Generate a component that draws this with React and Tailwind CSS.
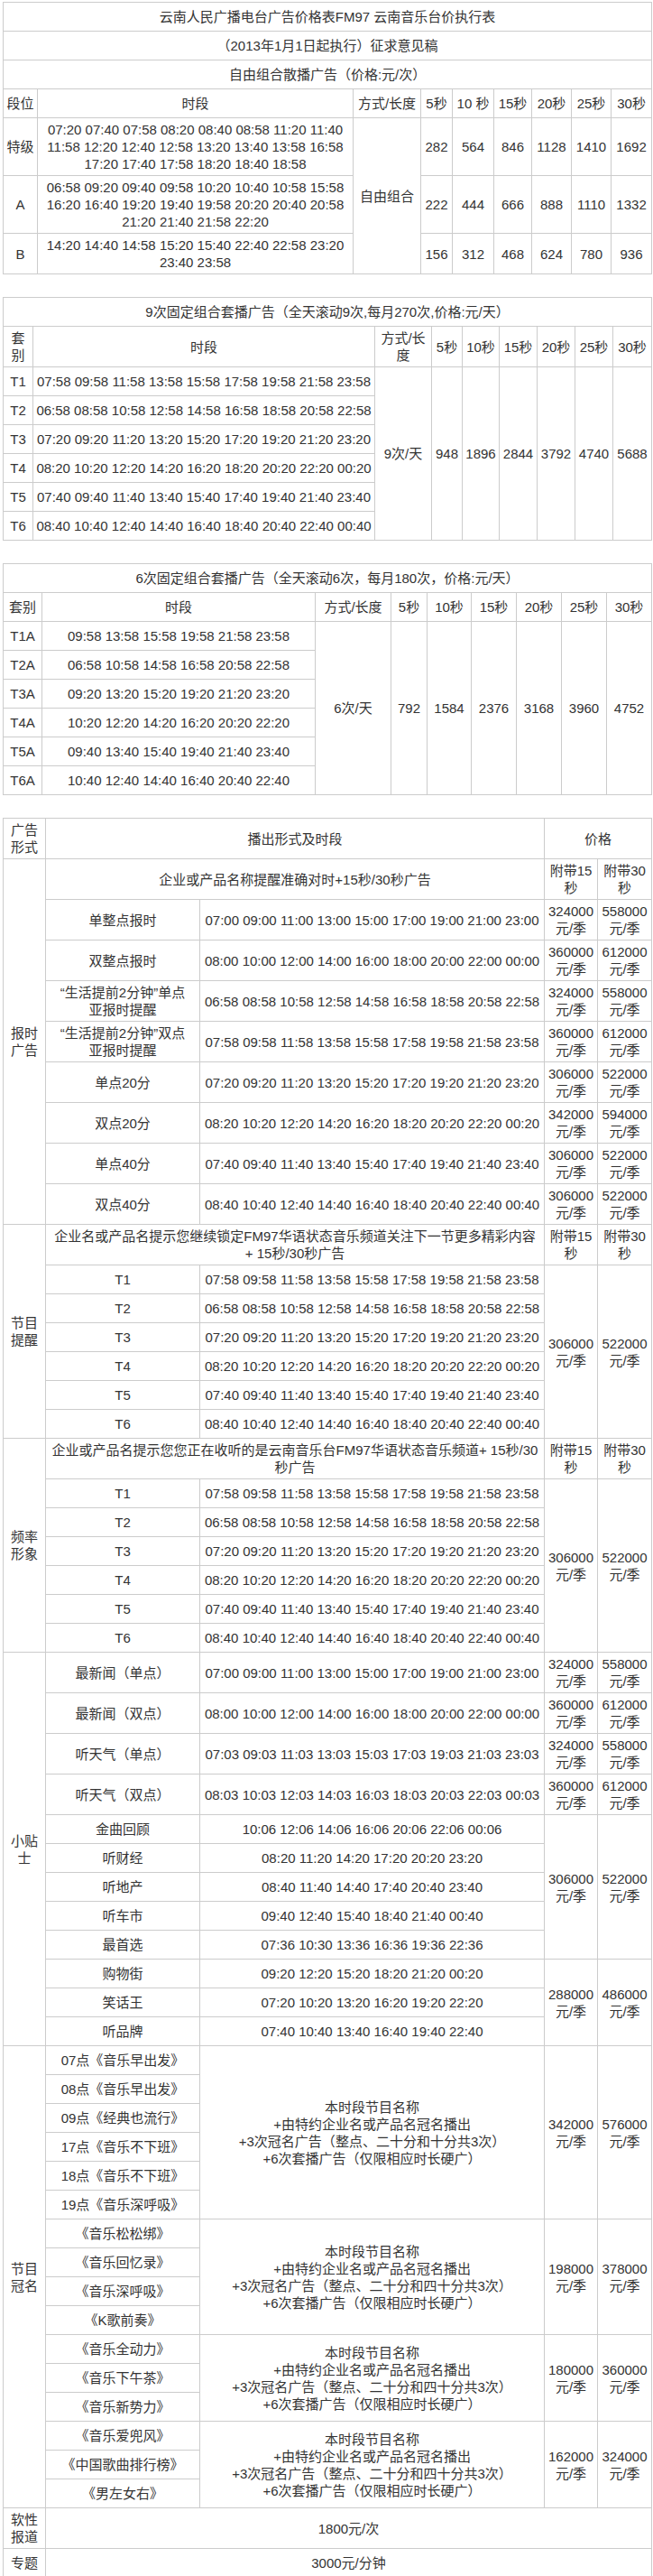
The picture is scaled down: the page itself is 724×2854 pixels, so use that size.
import React from 'react'

const TD = 'border border-[#cccccc] px-[3px] py-[3px] text-center align-middle font-normal'

const T_TIMES = [
  ['T1', '07:58 09:58 11:58 13:58 15:58 17:58 19:58 21:58 23:58'],
  ['T2', '06:58 08:58 10:58 12:58 14:58 16:58 18:58 20:58 22:58'],
  ['T3', '07:20 09:20 11:20 13:20 15:20 17:20 19:20 21:20 23:20'],
  ['T4', '08:20 10:20 12:20 14:20 16:20 18:20 20:20 22:20 00:20'],
  ['T5', '07:40 09:40 11:40 13:40 15:40 17:40 19:40 21:40 23:40'],
  ['T6', '08:40 10:40 12:40 14:40 16:40 18:40 20:40 22:40 00:40'],
]

const TA_TIMES = [
  ['T1A', '09:58 13:58 15:58 19:58 21:58 23:58'],
  ['T2A', '06:58 10:58 14:58 16:58 20:58 22:58'],
  ['T3A', '09:20 13:20 15:20 19:20 21:20 23:20'],
  ['T4A', '10:20 12:20 14:20 16:20 20:20 22:20'],
  ['T5A', '09:40 13:40 15:40 19:40 21:40 23:40'],
  ['T6A', '10:40 12:40 14:40 16:40 20:40 22:40'],
]

const FREE_ROWS = [
  {
    level: '特级',
    times: '07:20 07:40 07:58 08:20 08:40 08:58 11:20 11:40 11:58 12:20 12:40 12:58 13:20 13:40 13:58 16:58 17:20 17:40 17:58 18:20 18:40 18:58',
    prices: [282, 564, 846, 1128, 1410, 1692],
  },
  {
    level: 'A',
    times: '06:58 09:20 09:40 09:58 10:20 10:40 10:58 15:58 16:20 16:40 19:20 19:40 19:58 20:20 20:40 20:58 21:20 21:40 21:58 22:20',
    prices: [222, 444, 666, 888, 1110, 1332],
  },
  {
    level: 'B',
    times: '14:20 14:40 14:58 15:20 15:40 22:40 22:58 23:20 23:40 23:58',
    prices: [156, 312, 468, 624, 780, 936],
  },
]

const BAOSHI = [
  ['单整点报时', '07:00 09:00 11:00 13:00 15:00 17:00 19:00 21:00 23:00', '324000', '558000'],
  ['双整点报时', '08:00 10:00 12:00 14:00 16:00 18:00 20:00 22:00 00:00', '360000', '612000'],
  [['“生活提前2分钟”单点', '亚报时提醒'], '06:58 08:58 10:58 12:58 14:58 16:58 18:58 20:58 22:58', '324000', '558000'],
  [['“生活提前2分钟”双点', '亚报时提醒'], '07:58 09:58 11:58 13:58 15:58 17:58 19:58 21:58 23:58', '360000', '612000'],
  ['单点20分', '07:20 09:20 11:20 13:20 15:20 17:20 19:20 21:20 23:20', '306000', '522000'],
  ['双点20分', '08:20 10:20 12:20 14:20 16:20 18:20 20:20 22:20 00:20', '342000', '594000'],
  ['单点40分', '07:40 09:40 11:40 13:40 15:40 17:40 19:40 21:40 23:40', '306000', '522000'],
  ['双点40分', '08:40 10:40 12:40 14:40 16:40 18:40 20:40 22:40 00:40', '306000', '522000'],
]

const TIPS_PRICED = [
  ['最新闻（单点）', '07:00 09:00 11:00 13:00 15:00 17:00 19:00 21:00 23:00', '324000', '558000'],
  ['最新闻（双点）', '08:00 10:00 12:00 14:00 16:00 18:00 20:00 22:00 00:00', '360000', '612000'],
  ['听天气（单点）', '07:03 09:03 11:03 13:03 15:03 17:03 19:03 21:03 23:03', '324000', '558000'],
  ['听天气（双点）', '08:03 10:03 12:03 14:03 16:03 18:03 20:03 22:03 00:03', '360000', '612000'],
]

const TIPS_A = [
  ['金曲回顾', '10:06 12:06 14:06 16:06 20:06 22:06 00:06'],
  ['听财经', '08:20 11:20 14:20 17:20 20:20 23:20'],
  ['听地产', '08:40 11:40 14:40 17:40 20:40 23:40'],
  ['听车市', '09:40 12:40 15:40 18:40 21:40 00:40'],
  ['最首选', '07:36 10:30 13:36 16:36 19:36 22:36'],
]

const TIPS_B = [
  ['购物街', '09:20 12:20 15:20 18:20 21:20 00:20'],
  ['笑话王', '07:20 10:20 13:20 16:20 19:20 22:20'],
  ['听品牌', '07:40 10:40 13:40 16:40 19:40 22:40'],
]

const NAMING = [
  {
    shows: ['07点《音乐早出发》', '08点《音乐早出发》', '09点《经典也流行》', '17点《音乐不下班》', '18点《音乐不下班》', '19点《音乐深呼吸》'],
    slots: '整点、二十分和十分共3次',
    prices: ['342000', '576000'],
  },
  {
    shows: ['《音乐松松绑》', '《音乐回忆录》', '《音乐深呼吸》', '《K歌前奏》'],
    slots: '整点、二十分和四十分共3次',
    prices: ['198000', '378000'],
  },
  {
    shows: ['《音乐全动力》', '《音乐下午茶》', '《音乐新势力》'],
    slots: '整点、二十分和四十分共3次',
    prices: ['180000', '360000'],
  },
  {
    shows: ['《音乐爱兜风》', '《中国歌曲排行榜》', '《男左女右》'],
    slots: '整点、二十分和四十分共3次',
    prices: ['162000', '324000'],
  },
]

function Price({ value }) {
  return (
    <>
      {value}
      <br />
      元/季
    </>
  )
}

function Cols({ widths }) {
  return (
    <colgroup>
      {widths.map((w, i) => (
        <col key={i} style={{ width: w }} />
      ))}
    </colgroup>
  )
}

/* ---------------- 自由组合散播 ---------------- */
function FreeTable() {
  return (
    <table className="w-[719px] table-fixed border-collapse">
      <Cols widths={[38, 350, 75, 35, 46, 42, 44, 44, 45]} />
      <tbody>
        <tr className="h-[32px]">
          <td colSpan={9} className={TD}>云南人民广播电台广告价格表FM97 云南音乐台价执行表</td>
        </tr>
        <tr className="h-[32px]">
          <td colSpan={9} className={TD}>（2013年1月1日起执行）征求意见稿</td>
        </tr>
        <tr className="h-[32px]">
          <td colSpan={9} className={TD}>自由组合散播广告（价格:元/次）</td>
        </tr>
        <tr className="h-[32px]">
          <td className={TD}>段位</td>
          <td className={TD}>时段</td>
          <td className={TD}>方式/长度</td>
          <td className={TD}>5秒</td>
          <td className={TD}>10 秒</td>
          <td className={TD}>15秒</td>
          <td className={TD}>20秒</td>
          <td className={TD}>25秒</td>
          <td className={TD}>30秒</td>
        </tr>
        {FREE_ROWS.map((row, i) => (
          <tr key={row.level}>
            <td className={TD}>{row.level}</td>
            <td className={TD}>{row.times}</td>
            {i === 0 && (
              <td rowSpan={3} className={TD}>
                自由组合
              </td>
            )}
            {row.prices.map((p, j) => (
              <td key={j} className={TD}>
                {p}
              </td>
            ))}
          </tr>
        ))}
      </tbody>
    </table>
  )
}

/* ---------------- 固定组合套播 ---------------- */
function ComboTable({ title, widths, rows, mode, prices, label, modeHead }) {
  return (
    <table className="mt-[25px] w-[719px] table-fixed border-collapse">
      <Cols widths={widths} />
      <tbody>
        <tr className="h-[32px]">
          <td colSpan={9} className={TD}>{title}</td>
        </tr>
        <tr className="h-[32px]">
          <td className={TD}>{label}</td>
          <td className={TD}>时段</td>
          <td className={TD}>{modeHead}</td>
          <td className={TD}>5秒</td>
          <td className={TD}>10秒</td>
          <td className={TD}>15秒</td>
          <td className={TD}>20秒</td>
          <td className={TD}>25秒</td>
          <td className={TD}>30秒</td>
        </tr>
        {rows.map(([name, times], i) => (
          <tr key={name} className="h-[32px]">
            <td className={TD}>{name}</td>
            <td className={TD}>{times}</td>
            {i === 0 && (
              <>
                <td rowSpan={rows.length} className={TD}>
                  {mode}
                </td>
                {prices.map((p, j) => (
                  <td key={j} rowSpan={rows.length} className={TD}>
                    {p}
                  </td>
                ))}
              </>
            )}
          </tr>
        ))}
      </tbody>
    </table>
  )
}

/* ---------------- 报时 / 提醒 / 冠名 ---------------- */
function PackageTable() {
  return (
    <table className="mt-[25px] w-[719px] table-fixed border-collapse">
      <Cols widths={[47, 171, 382, 59, 60]} />
      <tbody>
        <tr>
          <td className={TD}>广告<br />形式</td>
          <td colSpan={2} className={TD}>播出形式及时段</td>
          <td colSpan={2} className={TD}>价格</td>
        </tr>

        {/* 报时广告 */}
        <tr>
          <td rowSpan={9} className={TD}>报时<br />广告</td>
          <td colSpan={2} className={TD}>企业或产品名称提醒准确对时+15秒/30秒广告</td>
          <td className={TD}>附带15<br />秒</td>
          <td className={TD}>附带30<br />秒</td>
        </tr>
        {BAOSHI.map(([name, times, p15, p30], i) => (
          <tr key={i}>
            <td className={TD}>
              {Array.isArray(name) ? (
                <>
                  {name[0]}
                  <br />
                  {name[1]}
                </>
              ) : (
                name
              )}
            </td>
            <td className={TD}>{times}</td>
            <td className={TD}>
              <Price value={p15} />
            </td>
            <td className={TD}>
              <Price value={p30} />
            </td>
          </tr>
        ))}

        {/* 节目提醒 */}
        <tr>
          <td rowSpan={7} className={TD}>节目<br />提醒</td>
          <td colSpan={2} className={TD}>
            企业名或产品名提示您继续锁定FM97华语状态音乐频道关注下一节更多精彩内容
            <br />+ 15秒/30秒广告
          </td>
          <td className={TD}>附带15<br />秒</td>
          <td className={TD}>附带30<br />秒</td>
        </tr>
        {T_TIMES.map(([name, times], i) => (
          <tr key={'r' + name} className="h-[32px]">
            <td className={TD}>{name}</td>
            <td className={TD}>{times}</td>
            {i === 0 && (
              <>
                <td rowSpan={6} className={TD}>
                  <Price value="306000" />
                </td>
                <td rowSpan={6} className={TD}>
                  <Price value="522000" />
                </td>
              </>
            )}
          </tr>
        ))}

        {/* 频率形象 */}
        <tr>
          <td rowSpan={7} className={TD}>频率<br />形象</td>
          <td colSpan={2} className={TD}>
            企业或产品名提示您您正在收听的是云南音乐台FM97华语状态音乐频道+ 15秒/30
            <br />
            秒广告
          </td>
          <td className={TD}>附带15<br />秒</td>
          <td className={TD}>附带30<br />秒</td>
        </tr>
        {T_TIMES.map(([name, times], i) => (
          <tr key={'f' + name} className="h-[32px]">
            <td className={TD}>{name}</td>
            <td className={TD}>{times}</td>
            {i === 0 && (
              <>
                <td rowSpan={6} className={TD}>
                  <Price value="306000" />
                </td>
                <td rowSpan={6} className={TD}>
                  <Price value="522000" />
                </td>
              </>
            )}
          </tr>
        ))}

        {/* 小贴士 */}
        {TIPS_PRICED.map(([name, times, p15, p30], i) => (
          <tr key={name}>
            {i === 0 && (
              <td rowSpan={12} className={TD}>
                小贴<br />士
              </td>
            )}
            <td className={TD}>{name}</td>
            <td className={TD}>{times}</td>
            <td className={TD}>
              <Price value={p15} />
            </td>
            <td className={TD}>
              <Price value={p30} />
            </td>
          </tr>
        ))}
        {TIPS_A.map(([name, times], i) => (
          <tr key={name} className="h-[32px]">
            <td className={TD}>{name}</td>
            <td className={TD}>{times}</td>
            {i === 0 && (
              <>
                <td rowSpan={5} className={TD}>
                  <Price value="306000" />
                </td>
                <td rowSpan={5} className={TD}>
                  <Price value="522000" />
                </td>
              </>
            )}
          </tr>
        ))}
        {TIPS_B.map(([name, times], i) => (
          <tr key={name} className="h-[32px]">
            <td className={TD}>{name}</td>
            <td className={TD}>{times}</td>
            {i === 0 && (
              <>
                <td rowSpan={3} className={TD}>
                  <Price value="288000" />
                </td>
                <td rowSpan={3} className={TD}>
                  <Price value="486000" />
                </td>
              </>
            )}
          </tr>
        ))}

        {/* 节目冠名 */}
        {NAMING.map((group, g) =>
          group.shows.map((show, i) => (
            <tr key={g + show} className="h-[32px]">
              {g === 0 && i === 0 && (
                <td rowSpan={16} className={TD}>
                  节目<br />冠名
                </td>
              )}
              <td className={TD}>{show}</td>
              {i === 0 && (
                <>
                  <td rowSpan={group.shows.length} className={TD}>
                    本时段节目名称
                    <br />
                    +由特约企业名或产品名冠名播出
                    <br />
                    +3次冠名广告（{group.slots}）
                    <br />
                    +6次套播广告（仅限相应时长硬广）
                  </td>
                  <td rowSpan={group.shows.length} className={TD}>
                    <Price value={group.prices[0]} />
                  </td>
                  <td rowSpan={group.shows.length} className={TD}>
                    <Price value={group.prices[1]} />
                  </td>
                </>
              )}
            </tr>
          ))
        )}

        <tr>
          <td className={TD}>软性<br />报道</td>
          <td colSpan={4} className={TD}>1800元/次</td>
        </tr>
        <tr className="h-[32px]">
          <td className={TD}>专题</td>
          <td colSpan={4} className={TD}>3000元/分钟</td>
        </tr>
      </tbody>
    </table>
  )
}

export default function App() {
  return (
    <div className="min-h-[2854px] w-[724px] bg-white pl-[3px] pt-[2px] font-['Liberation_Sans','Noto_Sans_CJK_SC',sans-serif] text-[15px] leading-[19px] text-[#333333]">
      <FreeTable />
      <ComboTable
        title="9次固定组合套播广告（全天滚动9次,每月270次,价格:元/天）"
        label={<>套<br />别</>}
        modeHead={<>方式/长<br />度</>}
        widths={[33, 379, 63, 34, 41, 42, 42, 42, 43]}
        rows={T_TIMES}
        mode="9次/天"
        prices={[948, 1896, 2844, 3792, 4740, 5688]}
      />
      <ComboTable
        title="6次固定组合套播广告（全天滚动6次，每月180次，价格:元/天）"
        label="套别"
        modeHead="方式/长度"
        widths={[43, 303, 84, 40, 49, 50, 50, 50, 50]}
        rows={TA_TIMES}
        mode="6次/天"
        prices={[792, 1584, 2376, 3168, 3960, 4752]}
      />
      <PackageTable />
    </div>
  )
}
